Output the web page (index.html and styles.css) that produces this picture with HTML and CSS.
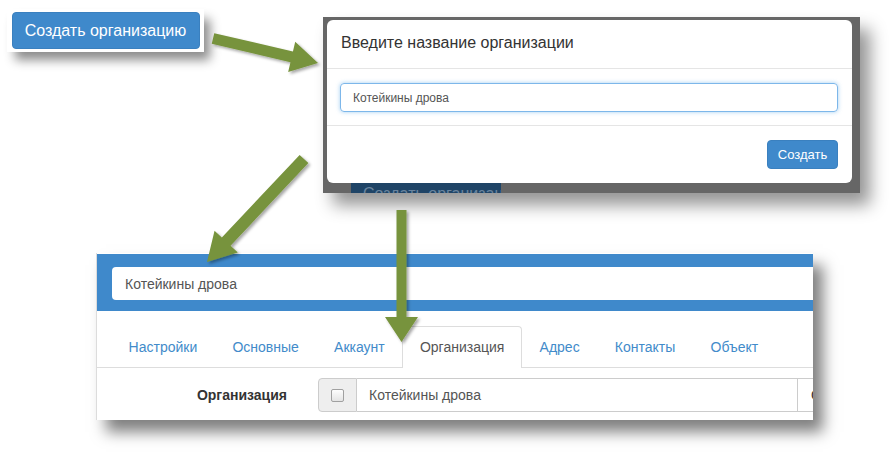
FILE: index.html
```html
<!DOCTYPE html>
<html lang="ru">
<head>
<meta charset="utf-8">
<title>Создать организацию</title>
<link rel="stylesheet" href="styles.css">
</head>
<body>
<div class="canvas">
  <div class="shot shot-btn"><span class="btn-create">Создать организацию</span></div>

  <div class="shot shot-modal">
    <div class="modal">
      <div class="modal-header"><span class="modal-title">Введите название организации</span></div>
      <div class="modal-body"><div class="modal-input">Котейкины дрова</div></div>
      <div class="modal-footer"><span class="btn-ok">Создать</span></div>
    </div>
    <div class="under"><span class="under-btn">Создать организацию</span></div>
  </div>

  <div class="shot shot-form">
    <div class="band"><div class="band-input">Котейкины дрова</div></div>
    <div class="tabs">
      <span class="tab">Настройки</span>
      <span class="tab">Основные</span>
      <span class="tab">Аккаунт</span>
      <span class="tab active">Организация</span>
      <span class="tab">Адрес</span>
      <span class="tab">Контакты</span>
      <span class="tab">Объект</span>
    </div>
    <div class="row">
      <span class="row-label">Организация</span>
      <div class="igroup">
        <span class="addon"><span class="cb"></span></span>
        <span class="ifield">Котейкины дрова</span>
        <span class="addon2">О</span>
      </div>
    </div>
  </div>

  <svg class="arrows" width="896" height="452" viewBox="0 0 896 452">
    <defs>
      <filter id="sh" x="-20%" y="-20%" width="140%" height="140%">
        <feDropShadow dx="2" dy="2" stdDeviation="1.5" flood-color="#000" flood-opacity="0.35"/>
      </filter>
    </defs>
    <g fill="#77933c" filter="url(#sh)">
      <polygon points="214.25,33.14 292.95,51.51 295.22,41.77 318,63 288.18,71.97 290.45,62.23 211.75,43.86"/>
      <polygon points="299.63,154.89 221.82,237.51 214.54,230.65 207,262 237.84,252.59 230.56,245.73 308.37,163.11"/>
      <polygon points="396.5,210 396.5,317 385,317 401.5,342 418,317 406.5,317 406.5,210"/>
    </g>
  </svg>
</div>
</body>
</html>
```

FILE: styles.css
```css
html, body {
  margin: 0;
  padding: 0;
  background: #fff;
}

body {
  font-family: "Liberation Sans", Arial, sans-serif;
  color: #333;
}

.canvas {
  position: relative;
  width: 896px;
  height: 452px;
  overflow: hidden;
  background: #fff;
}

.shot {
  position: absolute;
  box-sizing: border-box;
}

/* ---------- 1: button snippet ---------- */
.shot-btn {
  left: 7px;
  top: 9px;
  width: 197px;
  height: 43px;
  background: #fff;
  box-shadow: 7px 9px 10px -1px rgba(0, 0, 0, 0.45);
  display: flex;
  align-items: center;
  justify-content: center;
}

.btn-create {
  box-sizing: border-box;
  width: 188px;
  height: 37px;
  background: #3f89cb;
  border: 1px solid #3a80bf;
  border-radius: 4px;
  color: #fff;
  font-size: 16px;
  display: flex;
  align-items: center;
  justify-content: center;
}

/* ---------- 2: modal snippet ---------- */
.shot-modal {
  left: 323px;
  top: 17px;
  width: 537px;
  height: 176px;
  background: #666;
  padding: 3px 8px 0 4px;
  display: flex;
  flex-direction: column;
  box-shadow: 10px 12px 16px rgba(0, 0, 0, 0.42);
  overflow: hidden;
}

.modal {
  height: 163px;
  flex: none;
  background: #fff;
  border-radius: 6px;
  display: flex;
  flex-direction: column;
  box-sizing: border-box;
}

.modal-header {
  height: 49px;
  box-sizing: border-box;
  border-bottom: 1px solid #e5e5e5;
  padding-left: 14px;
  display: flex;
  align-items: center;
}

.modal-title {
  font-size: 16px;
  color: #333;
  margin-top: -2px;
}

.modal-body {
  height: 57px;
  box-sizing: border-box;
  border-bottom: 1px solid #e5e5e5;
  padding: 14px 14px 0 13px;
}

.modal-input {
  box-sizing: border-box;
  height: 29px;
  border: 1px solid #7db7ea;
  border-radius: 4px;
  box-shadow: 0 0 4px rgba(102, 175, 233, 0.6);
  padding-left: 12px;
  font-size: 12px;
  color: #555;
  display: flex;
  align-items: center;
}

.modal-footer {
  flex: 1;
  padding: 14px 14px 0 0;
  display: flex;
  justify-content: flex-end;
  align-items: flex-start;
}

.btn-ok {
  box-sizing: border-box;
  width: 71px;
  height: 29px;
  background: #3f89cb;
  border: 1px solid #3a80bf;
  border-radius: 4px;
  color: #fff;
  font-size: 13px;
  display: flex;
  align-items: center;
  justify-content: center;
}

.under {
  height: 10px;
  padding-left: 24px;
  display: flex;
}

.under-btn {
  width: 150px;
  height: 10px;
  overflow: hidden;
  background: #1f4466;
  color: #6a849e;
  font-size: 16px;
  line-height: 16px;
  padding: 3px 0 0 12px;
  box-sizing: border-box;
  white-space: nowrap;
}

/* ---------- 3: form snippet ---------- */
.shot-form {
  left: 96px;
  top: 253px;
  width: 717px;
  height: 167px;
  background: #fff;
  border-left: 1px solid #dcdcdc;
  box-shadow: 10px 12px 14px rgba(0, 0, 0, 0.5);
  overflow: hidden;
  padding-top: 1px;
}

.band {
  height: 57px;
  background: #3f89cb;
  padding: 13px 0 0 15px;
  box-sizing: border-box;
}

.band-input {
  box-sizing: border-box;
  width: 740px;
  height: 33px;
  background: #fff;
  border-radius: 4px;
  padding-left: 13px;
  font-size: 14px;
  color: #555;
  display: flex;
  align-items: center;
}

.tabs {
  height: 57px;
  box-sizing: border-box;
  border-bottom: 1px solid #ddd;
  padding-left: 14px;
  display: flex;
  align-items: flex-end;
}

.tab {
  height: 41px;
  line-height: 41px;
  padding: 0 16.6px;
  font-size: 14px;
  color: #428bca;
  box-sizing: border-box;
  border: 1px solid transparent;
  border-bottom: none;
  white-space: nowrap;
}

.tab.active {
  color: #555;
  background: #fff;
  border-color: #ddd;
  border-radius: 4px 4px 0 0;
  height: 42px;
  margin-bottom: -1px;
  line-height: 41px;
}

.row {
  padding-top: 10px;
  display: flex;
  align-items: center;
}

.row-label {
  width: 190px;
  padding-right: 31px;
  box-sizing: content-box;
  text-align: right;
  font-size: 14px;
  font-weight: bold;
  color: #333;
  flex: none;
}

.igroup {
  display: flex;
  height: 34px;
  flex: none;
}

.addon {
  box-sizing: border-box;
  width: 39px;
  height: 34px;
  background: #eee;
  border: 1px solid #ccc;
  border-radius: 4px 0 0 4px;
  display: flex;
  align-items: center;
  justify-content: center;
}

.cb {
  width: 11px;
  height: 11px;
  border: 1px solid #a0a0a0;
  border-radius: 2px;
  background: linear-gradient(#fdfdfd, #e4e4e4);
}

.ifield {
  box-sizing: border-box;
  width: 441px;
  height: 34px;
  border: 1px solid #ccc;
  border-left: none;
  padding-left: 12px;
  font-size: 14px;
  color: #555;
  display: flex;
  align-items: center;
}

.addon2 {
  box-sizing: border-box;
  width: 80px;
  height: 34px;
  border: 1px solid #ccc;
  border-left: none;
  padding-left: 13px;
  font-size: 14px;
  color: #333;
  display: flex;
  align-items: center;
}

/* ---------- arrows overlay ---------- */
.arrows {
  position: absolute;
  left: 0;
  top: 0;
  pointer-events: none;
}
```
